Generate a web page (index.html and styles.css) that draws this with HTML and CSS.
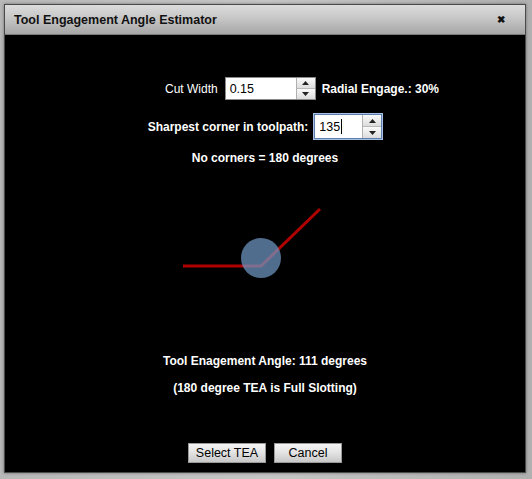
FILE: index.html
```html
<!DOCTYPE html>
<html>
<head>
<meta charset="utf-8">
<link rel="stylesheet" href="styles.css">
</head>
<body>
<div class="page">
  <div class="dialog">
    <div class="titlebar">
      <span class="title">Tool Engagement Angle Estimator</span>
      <span class="close">&#x2716;</span>
    </div>
    <div class="content">
      <div class="row row1">
        <span class="label">Cut Width</span>
        <div class="spinner w90">
          <span class="value">0.15</span>
          <div class="arrows">
            <div class="arr up"><svg width="7" height="4" viewBox="0 0 7 4"><path d="M0 4 L3.5 0 L7 4 Z" fill="#222"/></svg></div>
            <div class="arr down"><svg width="7" height="4" viewBox="0 0 7 4"><path d="M0 0 L3.5 4 L7 0 Z" fill="#222"/></svg></div>
          </div>
        </div>
        <span class="bold">Radial Engage.: 30%</span>
      </div>
      <div class="row row2">
        <span class="bold">Sharpest corner in toolpath:</span>
        <div class="spinner w68 focus">
          <span class="value">135<span class="caret"></span></span>
          <div class="arrows">
            <div class="arr up"><svg width="7" height="4" viewBox="0 0 7 4"><path d="M0 4 L3.5 0 L7 4 Z" fill="#222"/></svg></div>
            <div class="arr down"><svg width="7" height="4" viewBox="0 0 7 4"><path d="M0 0 L3.5 4 L7 0 Z" fill="#222"/></svg></div>
          </div>
        </div>
      </div>
      <div class="note bold">No corners = 180 degrees</div>
      <svg class="drawing" width="522" height="100" viewBox="0 0 522 100">
        <polyline points="179,76 257,76 316,19" fill="none" stroke="#b00000" stroke-width="3"/>
        <circle cx="257" cy="68" r="20" fill="#6f97c4" fill-opacity="0.72"/>
      </svg>
      <div class="result bold">Tool Enagement Angle: 111 degrees</div>
      <div class="result2 bold">(180 degree TEA is Full Slotting)</div>
      <div class="buttons">
        <button class="btn b1">Select TEA</button>
        <button class="btn b2">Cancel</button>
      </div>
    </div>
  </div>
</div>
</body>
</html>
```

FILE: styles.css
```css
html, body {
  margin: 0;
  padding: 0;
}
body {
  width: 532px;
  height: 479px;
  overflow: hidden;
  font-family: "Liberation Sans", Arial, sans-serif;
  font-size: 12px;
  background: linear-gradient(to right, #b8b8b8 0%, #c6c6c6 50%, #b0b0b0 100%);
}
.page {
  padding: 4px 0 0 4px;
}
.dialog {
  width: 520px;
  height: 467px;
  border: 1px solid #4a4a4a;
  background: #000;
  display: flex;
  flex-direction: column;
  box-shadow: 0 0 3px rgba(0,0,0,0.4);
}
.titlebar {
  height: 30px;
  flex: none;
  background: linear-gradient(to bottom, #dcdcdc 0%, #c4c4c4 50%, #a6a6a6 100%);
  display: flex;
  align-items: center;
  justify-content: space-between;
  padding: 0 20px 0 9px;
  border-bottom: 1px solid #7a7a7a;
  box-sizing: border-box;
}
.title {
  font-weight: bold;
  font-size: 12.5px;
  color: #111;
}
.close {
  font-size: 10px;
  color: #111;
  font-weight: bold;
}
.content {
  display: flex;
  flex-direction: column;
  align-items: center;
  color: #fff;
  padding-top: 42px;
}
.row {
  display: flex;
  align-items: center;
  gap: 6px;
}
.row1 {
  margin-left: 74px;
}
.row1 .label {
  margin-right: 1px;
}
.row2 {
  margin-top: 14px;
}
.bold {
  font-weight: bold;
  color: #fff;
}
.spinner {
  height: 23px;
  background: #fff;
  border: 1px solid #8a8a8a;
  box-sizing: border-box;
  display: flex;
  color: #000;
  font-size: 12.5px;
}
.w90 { width: 91px; }
.w68 { width: 68px; height: 25px; }
.spinner.focus {
  border: 1px solid #5a7fb0;
  box-shadow: 0 0 0 1px #a8c0e0;
}
.value {
  flex: 1;
  display: flex;
  align-items: center;
  padding-left: 4px;
}
.caret {
  display: inline-block;
  width: 1px;
  height: 15px;
  background: #000;
  margin-left: 1px;
}
.arrows {
  width: 18px;
  display: flex;
  flex-direction: column;
  border-left: 1px solid #b0b0b0;
}
.arr {
  flex: 1;
  display: flex;
  align-items: center;
  justify-content: center;
  background: linear-gradient(to bottom, #fafafa, #dcdcdc);
}
.arr.down {
  border-top: 1px solid #b8b8b8;
}
.note {
  margin-top: 12px;
}
.drawing {
  display: block;
  margin-top: 25px;
}
.result {
  margin-top: 64px;
}
.result2 {
  margin-top: 13px;
}
.buttons {
  display: flex;
  gap: 8px;
  margin-top: 48px;
}
.btn {
  height: 20px;
  font-family: "Liberation Sans", Arial, sans-serif;
  font-size: 12.5px;
  color: #000;
  background: linear-gradient(to bottom, #f6f6f6 0%, #e2e2e2 50%, #c8c8c8 100%);
  border: 1px solid #9a9a9a;
  padding: 0;
  margin: 0;
}
.b1 { width: 78px; }
.b2 { width: 68px; }
```
